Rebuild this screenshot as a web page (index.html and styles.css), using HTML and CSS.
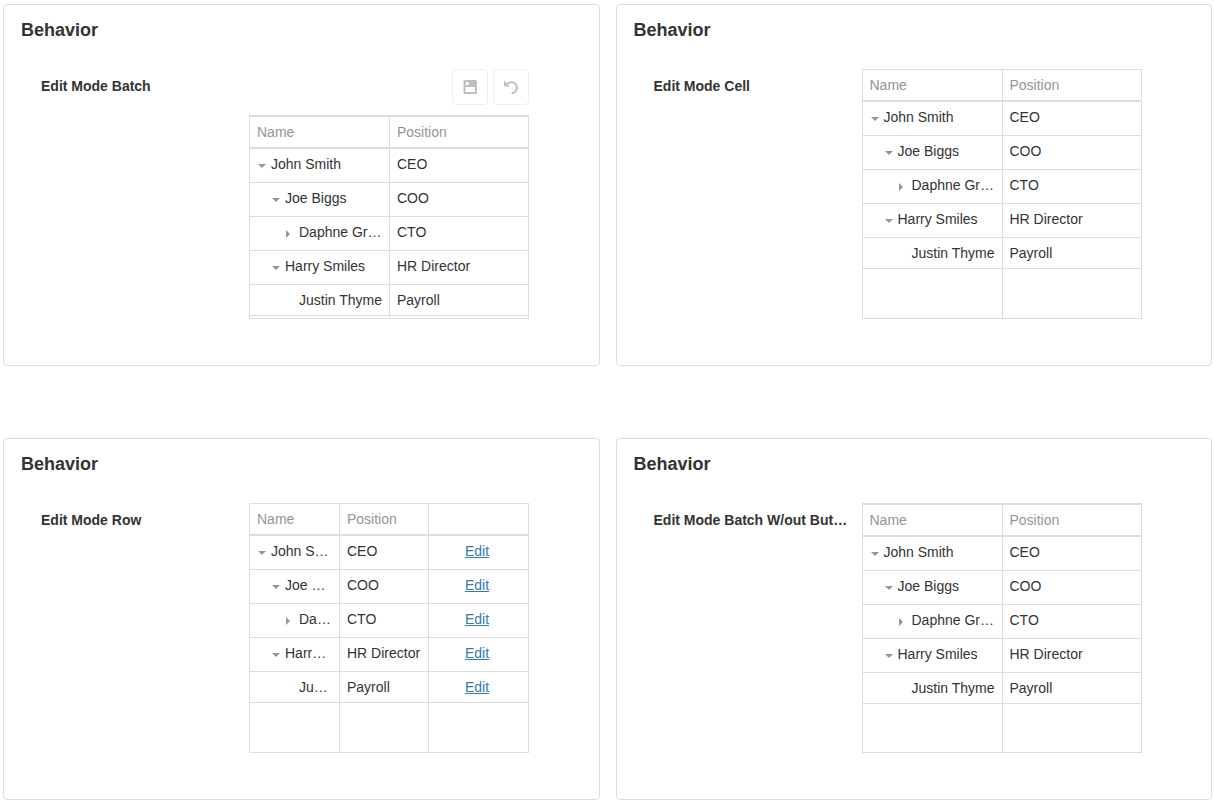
FILE: index.html
```html
<!DOCTYPE html>
<html lang="en">
<head>
<meta charset="utf-8">
<title>Tree Behavior</title>
<link rel="stylesheet" href="styles.css">
</head>
<body>
<main class="board">
  <section class="card">
    <h2 class="card-title">Behavior</h2>
    <div class="field">
      <h3 class="field-label" id="label-batch">Edit Mode Batch</h3>
      <div class="field-control">
        <div class="toolbar">
          <button class="tool" type="button" aria-label="Save" disabled>
            <svg width="18" height="18" viewBox="0 0 18 18"><path fill="currentColor" fill-rule="evenodd" d="M4 2h10.500q1.500 0 1.500 1.500v11q0 1.500-1.500 1.500H4Q2.500 16 2.500 14.500v-11Q2.500 2 4 2zM4.500 9v5H14V9zM5 4v3h2.500V4z"/></svg>
          </button>
          <button class="tool" type="button" aria-label="Undo" disabled>
            <svg width="18" height="18" viewBox="0 0 18 18"><path fill="currentColor" d="M2 2.500v6h6L5.700 6.200z"/><path fill="none" stroke="currentColor" stroke-width="2" d="M4.500 6.800C6 4.900 7.600 4.200 9.500 4.200a5.500 5.500 0 0 1 0 11"/></svg>
          </button>
        </div>
        <table class="tree tree-batch tree-tight" aria-labelledby="label-batch">
          <thead><tr><th>Name</th><th>Position</th></tr></thead>
          <tbody>
            <tr><td><button class="caret open" type="button" aria-label="Collapse"></button>John Smith</td><td>CEO</td></tr>
            <tr><td class="level-1"><button class="caret open" type="button" aria-label="Collapse"></button>Joe Biggs</td><td>COO</td></tr>
            <tr><td class="level-2"><button class="caret closed" type="button" aria-label="Expand"></button>Daphne Green</td><td>CTO</td></tr>
            <tr><td class="level-1"><button class="caret open" type="button" aria-label="Collapse"></button>Harry Smiles</td><td>HR Director</td></tr>
            <tr class="last"><td class="level-3">Justin Thyme</td><td>Payroll</td></tr>
            <tr class="filler"><td></td><td></td></tr>
          </tbody>
        </table>
      </div>
    </div>
  </section>

  <section class="card">
    <h2 class="card-title">Behavior</h2>
    <div class="field">
      <h3 class="field-label" id="label-cell">Edit Mode Cell</h3>
      <div class="field-control">
        <table class="tree" aria-labelledby="label-cell">
          <thead><tr><th>Name</th><th>Position</th></tr></thead>
          <tbody>
            <tr><td><button class="caret open" type="button" aria-label="Collapse"></button>John Smith</td><td>CEO</td></tr>
            <tr><td class="level-1"><button class="caret open" type="button" aria-label="Collapse"></button>Joe Biggs</td><td>COO</td></tr>
            <tr><td class="level-2"><button class="caret closed" type="button" aria-label="Expand"></button>Daphne Green</td><td>CTO</td></tr>
            <tr><td class="level-1"><button class="caret open" type="button" aria-label="Collapse"></button>Harry Smiles</td><td>HR Director</td></tr>
            <tr class="last"><td class="level-3">Justin Thyme</td><td>Payroll</td></tr>
            <tr class="filler"><td></td><td></td></tr>
          </tbody>
        </table>
      </div>
    </div>
  </section>

  <section class="card">
    <h2 class="card-title">Behavior</h2>
    <div class="field">
      <h3 class="field-label" id="label-row">Edit Mode Row</h3>
      <div class="field-control">
        <table class="tree" aria-labelledby="label-row">
          <colgroup><col><col><col class="col-actions"></colgroup>
          <thead><tr><th>Name</th><th>Position</th><th></th></tr></thead>
          <tbody>
            <tr><td><button class="caret open" type="button" aria-label="Collapse"></button>John Smith</td><td>CEO</td><td class="actions"><a href="#">Edit</a></td></tr>
            <tr><td class="level-1"><button class="caret open" type="button" aria-label="Collapse"></button>Joe Biggs</td><td>COO</td><td class="actions"><a href="#">Edit</a></td></tr>
            <tr><td class="level-2"><button class="caret closed" type="button" aria-label="Expand"></button>Daphne Green</td><td>CTO</td><td class="actions"><a href="#">Edit</a></td></tr>
            <tr><td class="level-1"><button class="caret open" type="button" aria-label="Collapse"></button>Harry Smiles</td><td>HR Director</td><td class="actions"><a href="#">Edit</a></td></tr>
            <tr class="last"><td class="level-3">Justin Thyme</td><td>Payroll</td><td class="actions"><a href="#">Edit</a></td></tr>
            <tr class="filler"><td></td><td></td><td></td></tr>
          </tbody>
        </table>
      </div>
    </div>
  </section>

  <section class="card">
    <h2 class="card-title">Behavior</h2>
    <div class="field">
      <h3 class="field-label" id="label-plain">Edit Mode Batch W/out Buttons</h3>
      <div class="field-control">
        <table class="tree tree-batch" aria-labelledby="label-plain">
          <thead><tr><th>Name</th><th>Position</th></tr></thead>
          <tbody>
            <tr><td><button class="caret open" type="button" aria-label="Collapse"></button>John Smith</td><td>CEO</td></tr>
            <tr><td class="level-1"><button class="caret open" type="button" aria-label="Collapse"></button>Joe Biggs</td><td>COO</td></tr>
            <tr><td class="level-2"><button class="caret closed" type="button" aria-label="Expand"></button>Daphne Green</td><td>CTO</td></tr>
            <tr><td class="level-1"><button class="caret open" type="button" aria-label="Collapse"></button>Harry Smiles</td><td>HR Director</td></tr>
            <tr class="last"><td class="level-3">Justin Thyme</td><td>Payroll</td></tr>
            <tr class="filler"><td></td><td></td></tr>
          </tbody>
        </table>
      </div>
    </div>
  </section>
</main>
</body>
</html>
```

FILE: styles.css
```css
* { box-sizing: border-box; }

body {
  margin: 0;
  background: #fff;
  color: #333;
  font: 14px/16px "Liberation Sans", Arial, sans-serif;
}

.board {
  display: grid;
  grid-template-columns: repeat(2, minmax(0, 1fr));
  gap: 72px 16px;
  padding: 4px 2px 2px 3px;
}

.card {
  border: 1px solid #ddd;
  border-radius: 4px;
  padding: 15px 17px 46px;
}

.card-title {
  margin: 0 0 29px;
  font-size: 18px;
  line-height: 20px;
}

.field {
  display: grid;
  grid-template-columns: minmax(0, 198px) 280px;
  gap: 10px;
  padding-left: 20px;
}

.field-label {
  margin: 0;
  padding-top: 7px;
  font-size: 14px;
  line-height: 20px;
  overflow: hidden;
  text-overflow: ellipsis;
  white-space: nowrap;
}

.toolbar {
  display: flex;
  justify-content: flex-end;
  gap: 5px;
  margin-bottom: 10px;
}

.tool {
  display: flex;
  align-items: center;
  justify-content: center;
  width: 36px;
  height: 36px;
  padding: 0;
  border: 1px solid #eee;
  border-radius: 4px;
  background: #fff;
  color: #bfbfbf;
}

.tree {
  width: 100%;
  table-layout: fixed;
  border: 1px solid #ddd;
  border-collapse: separate;
  border-spacing: 0;
}

.tree-batch { border-top-width: 2px; }

.col-actions { width: 100px; }

.tree th,
.tree td {
  padding: 7px 6px 7px 7px;
  overflow: hidden;
  text-align: left;
  text-overflow: ellipsis;
  white-space: nowrap;
}

.tree th {
  height: 32px;
  border-bottom: 2px solid #ddd;
  color: #959595;
  font-weight: 400;
}

.tree td {
  padding-bottom: 10px;
  border-bottom: 1px solid #ddd;
  vertical-align: top;
}

.tree .last td { padding-bottom: 7px; }

.tree th + th,
.tree td + td { border-left: 1px solid #ddd; }

.tree .level-1 { padding-left: 21px; }
.tree .level-2 { padding-left: 35px; }
.tree .level-3 { padding-left: 49px; }

.tree .actions {
  padding-right: 10px;
  text-align: center;
}

.actions a { color: #337ab7; }

.tree .filler td {
  height: 49px;
  padding: 0;
  border-bottom: 0;
}

.tree-batch .filler td { height: 48px; }
.tree-tight .filler td { height: 2px; }

.caret {
  display: inline-flex;
  align-items: flex-start;
  justify-content: flex-start;
  width: 14px;
  height: 16px;
  padding: 8px 0 0 1px;
  border: 0;
  background: none;
  vertical-align: top;
}

.caret.closed { padding-top: 6px; }

.caret::before {
  content: "";
  border: 4px solid transparent;
}

.open::before {
  border-top-color: #959595;
  border-bottom: 0;
}

.closed::before {
  border-left-color: #959595;
  border-right: 0;
}
```
